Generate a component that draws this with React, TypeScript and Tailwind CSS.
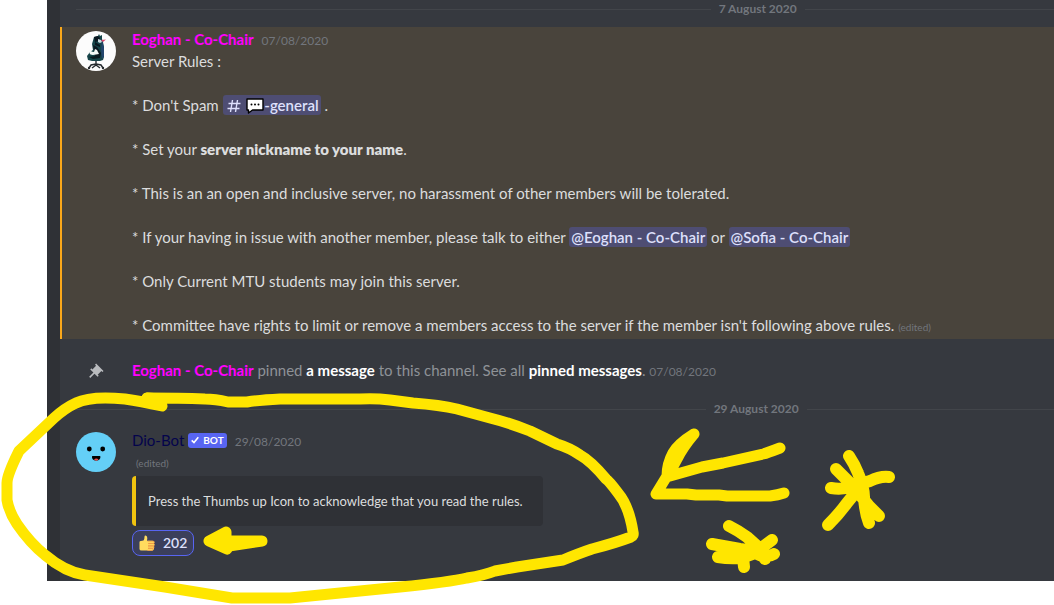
import type { ReactNode } from "react";

function DateDivider({ children }: { children: ReactNode }) {
  return (
    <div className="flex h-4 items-center gap-1 pl-4">
      <span className="h-px grow-[28] basis-0 bg-[#42454a]" />
      <span className="px-1 text-xs font-bold leading-4 text-[#72767d]">{children}</span>
      <span className="h-px grow-[11] basis-0 bg-[#42454a]" />
    </div>
  );
}

function Mention({ children }: { children: ReactNode }) {
  return (
    <a href="#mention" className="rounded-[3px] bg-[#4e4d73] px-0.5 py-px font-semibold text-[#dee0fc]">
      {children}
    </a>
  );
}

function Timestamp({ children }: { children: ReactNode }) {
  return <time className="text-xs text-[#72767d]">{children}</time>;
}

function ChairAvatar() {
  return (
    <svg viewBox="0 0 40 40" className="size-10 shrink-0" role="img" aria-label="Eoghan">
      <circle cx="20" cy="20" r="20" fill="#fcfcfc" />
      <path d="M18 6l4-1 1-2 1 2 2-1v4l1 3 1 5v10l-1 3-3 1H16l-4-1-1-4 3-4 3-2-1-6z" fill="#164449" />
      <path d="M18 6l4-1 2 2-1 3-4 1zM17 14l4 2 4 6-1 5-7 1-4-2 6-1zM19 11l5 3v2l-5-2z" fill="#0b1820" />
      <path d="M26 9l2 8v8l-2 3-1-9z" fill="#23466e" />
      <path d="M14 18c-1 3-1 6 3 6l6-1-2-4-2-1-1 3c-2 0-4-1-4-3z" fill="#f5f8f8" />
      <path d="M22 8l3 1 1 2-2 1-2-1z" fill="#c9d9df" />
      <path d="M25 9l5-.5-3 2.500z" fill="#d8466b" />
      <path d="M20 30v5M13 37l2-3 5-1 5 1 2 3M16 37l4-3 4 3" fill="none" stroke="#252a2e" strokeWidth="1.400" />
      <circle cx="13" cy="37" r="1.200" fill="#252a2e" />
      <circle cx="27" cy="37" r="1.200" fill="#252a2e" />
    </svg>
  );
}

function BotAvatar() {
  return (
    <svg viewBox="0 0 40 40" className="size-10 shrink-0" role="img" aria-label="Dio-Bot">
      <circle cx="20" cy="20" r="20" fill="#64cff7" />
      <circle cx="13.300" cy="17" r="2.400" fill="#000" />
      <circle cx="26.700" cy="17" r="2.400" fill="#000" />
      <path d="M16.200 24h8c.8 2.500-1 4.500-4 4.500s-4.800-2-4-4.500z" fill="#000" />
      <path d="M18 27.500c1-1.300 3.500-1.300 4.500 0-1 1.500-3.500 1.500-4.500 0z" fill="#ee4b4b" />
    </svg>
  );
}

function SpeechIcon() {
  return (
    <svg viewBox="0 0 18 16" className="inline-block h-4 w-[18px] align-[-3px]" aria-hidden="true">
      <path d="M1 1h16v11H6.500l-4 3v-3H1z" fill="#fff" stroke="#000" strokeWidth="1.400" strokeLinejoin="round" />
      <circle cx="5.500" cy="6.500" r="1" fill="#000" />
      <circle cx="9" cy="6.500" r="1" fill="#000" />
      <circle cx="12.500" cy="6.500" r="1" fill="#000" />
    </svg>
  );
}

function HashIcon() {
  return (
    <svg viewBox="0 0 16 16" className="mx-px inline-block size-4 align-[-3px]" aria-hidden="true">
      <path d="M6.500 2L4.500 14M11.500 2L9.500 14M2.500 5.500h12M1.500 10.500h12" fill="none" stroke="#dee0fc" strokeWidth="1.400" />
    </svg>
  );
}

function PinIcon() {
  return (
    <svg viewBox="0 0 24 24" className="size-[18px]" aria-hidden="true">
      <path
        d="M22 12L12.101 2.101 10.686 3.514 12.101 4.929 7.151 9.878V9.879L5.736 8.465 4.322 9.879 8.565 14.121 2.908 19.778 4.322 21.192 9.979 15.536 14.222 19.778 15.636 18.364 14.222 16.950 19.171 12H19.172L20.586 13.414z"
        fill="#b9bbbe"
      />
    </svg>
  );
}

function ThumbIcon() {
  return (
    <svg viewBox="0 0 16 16" className="size-4" aria-hidden="true">
      <path d="M.5 7.200Q.5 6 1.800 6L4.500 5.600Q5.500 4.500 5.500 1.700 5.500.3 6.700.4 8.500.8 8.300 3.200L8 5.700H13.500Q15 5.800 15 7.200V14Q14.500 15.600 12.500 15.600H2.500Q.5 15.600.5 14z" fill="#ffdb5e" />
      <path d="M8.600 6.200h5.500q1.300 0 1.300 1.100T14.200 8.400H9.500M9 8.600h5.400q1.100.1 1.100 1.100t-1.200 1.100H9M9 11h5q1.100.1 1.100 1.100T14 13.200H9M9 13.400h4.300q1 .1.900 1-.1 1-1.200 1H8.500" fill="#ffdb5e" stroke="#ee9547" strokeWidth="0.800" />
    </svg>
  );
}

function MarkerStrokes() {
  return (
    <svg
      viewBox="0 0 1054 605"
      className="pointer-events-none absolute left-0 top-0 h-[605px] w-[1054px]"
      fill="none"
      stroke="#ffe600"
      strokeWidth="11"
      strokeLinecap="round"
      strokeLinejoin="round"
      aria-hidden="true"
    >
      <path d="M162 406Q140 401 125 399C105 397 86 398 76 403Q65 408 54 418L19 451Q7 475 7 483V500Q9 512 17 524Q30 543 45 555Q65 572 85 575L165 587L232 598H290L350 592L400 587Q450 582 467 578Q485 575 495 571L517 567L563 560Q580 553 592 549Q615 543 631 537Q634 536 633 532Q629 506 618 493Q609 481 606 479Q591 461 580 455Q570 448 557 444L530 431Q510 423 490 418L457 409Q440 405 413 403L390 400Q375 398 360 399H280Q260 400 247 402H228Q215 399 205 399Q180 398 147 398" />
      <path d="M147 398L160 399V405Z" fill="#ffe600" />
      <path d="M209 541L226 532V541H262L242 544L229 546L227 549Z" fill="#ffe600" />
      <path d="M694 434Q678 444 673 453Q667 464 667 476L656 494H687L696 495H719L727 496H770Q778 495 784 493M780 448Q767 453 763 454L723 463L702 467L670 476M694 434Q683 447 677 459L669 474" />
      <path strokeWidth="12" d="M849 456Q855 465 858 473Q864 487 864 497Q865 513 869 523M836 469L852 485L869 506L879 516M831 488Q843 490 853 486L870 481Q880 476 889 477M828 525Q839 514 847 503L860 487" />
      <path strokeWidth="12" d="M729 526Q739 531 747 537L757 546L765 559M772 540L760 549L753 552L740 556M712 544L740 549L760 552M718 557Q729 559 741 558L755 553Q766 559 774 554M744 567L743 557" />
    </svg>
  );
}

export default function App() {
  return (
    <div className="relative overflow-x-hidden bg-white pb-6 pl-[47px] font-['Lato','Noto_Sans',sans-serif] text-[15px] leading-[22px] text-[#dcddde]">
      <main className="border-l-[13px] border-[#2f3136] bg-[#36393f] pb-[25px] pt-px">
        <DateDivider>7 August 2020</DateDivider>

        <article className="mt-2.5 flex gap-4 border-l-2 border-[#faa81a] bg-[#49443c] pb-[3px] pl-3.5 pr-4 pt-px">
          <div className="pt-[3px]">
            <ChairAvatar />
          </div>
          <div className="min-w-0 flex-1">
            <header className="flex items-baseline gap-2">
              <h3 className="font-bold text-[#f0f]">Eoghan - Co-Chair</h3>
              <Timestamp>07/08/2020</Timestamp>
            </header>
            <div className="flex flex-col gap-[22px]">
              <p>Server Rules :</p>
              <p>
                * Don't Spam{" "}
                <Mention>
                  <HashIcon /> <SpeechIcon />-general
                </Mention>{" "}
                .
              </p>
              <p>
                * Set your <strong className="font-extrabold">server nickname to your name</strong>.
              </p>
              <p>* This is an an open and inclusive server, no harassment of other members will be tolerated.</p>
              <p>
                * If your having in issue with another member, please talk to either <Mention>@Eoghan - Co-Chair</Mention> or{" "}
                <Mention>@Sofia - Co-Chair</Mention>
              </p>
              <p>* Only Current MTU students may join this server.</p>
              <p>
                * Committee have rights to limit or remove a members access to the server if the member isn't following above
                rules. <span className="text-[10px] leading-none text-[#72767d]">(edited)</span>
              </p>
            </div>
          </div>
        </article>

        <article className="mt-5 flex gap-4 pl-4 text-[#8e9297]">
          <div className="flex w-10 items-center justify-center pt-0.5">
            <PinIcon />
          </div>
          <p>
            <span className="font-bold text-[#f0f]">Eoghan - Co-Chair</span> pinned{" "}
            <a href="#message" className="font-bold text-white">a message</a> to this channel. See all{" "}
            <a href="#pins" className="font-bold text-white">pinned messages</a>. <Timestamp>07/08/2020</Timestamp>
          </p>
        </article>

        <div className="mt-5">
          <DateDivider>29 August 2020</DateDivider>
        </div>

        <article className="mt-3 flex gap-4 pl-4">
          <div className="pt-[3px]">
            <BotAvatar />
          </div>
          <div className="min-w-0 flex-1">
            <header className="flex items-center gap-1">
              <h3 className="text-[#04044c]">Dio-Bot</h3>
              <span className="flex h-[15px] items-center gap-1 rounded-[3px] bg-[#5865f2] px-[3px] text-[10px] font-bold text-white">
                <svg viewBox="0 0 8 8" className="size-2" aria-hidden="true">
                  <path d="M.7 4.300L3 6.500 7.300 1.300" fill="none" stroke="#fff" strokeWidth="1.600" />
                </svg>
                BOT
              </span>
              <span className="pl-1">
                <Timestamp>29/08/2020</Timestamp>
              </span>
            </header>
            <p className="pb-px pl-1 text-[10px] leading-6 text-[#72767d]">(edited)</p>
            <div className="w-fit rounded border-l-4 border-[#f1c40f] bg-[#2f3136] py-4 pl-3 pr-5 text-[13px] leading-[18px]">
              Press the Thumbs up Icon to acknowledge that you read the rules.
            </div>
            <button
              type="button"
              className="mt-1 flex h-[26px] items-center gap-2 rounded-lg border border-[#5865f2] bg-[#3b3f5b] px-1.5 text-sm font-semibold text-[#dee0fc]"
            >
              <ThumbIcon />
              202
            </button>
          </div>
        </article>
      </main>
      <MarkerStrokes />
    </div>
  );
}
